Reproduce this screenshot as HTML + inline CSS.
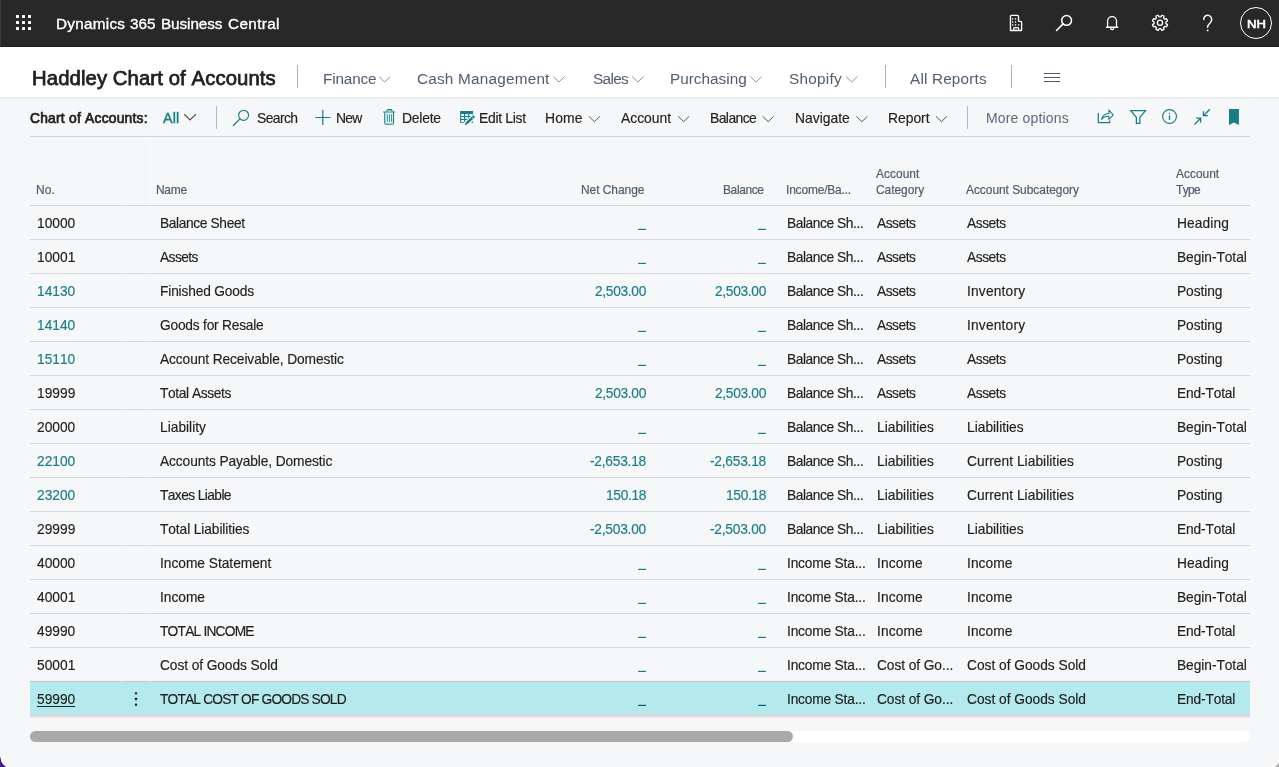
<!DOCTYPE html>
<html><head><meta charset="utf-8"><title>Chart of Accounts</title>
<style>
html,body{margin:0;padding:0;}
html{background:#f6f7f9;}
body{width:1279px;height:767px;overflow:hidden;position:relative;background:#f6f7f9;font-family:"Liberation Sans",sans-serif;}
.t{position:absolute;white-space:nowrap;font-kerning:none;}
#ly{position:absolute;left:0;top:0;width:1279px;height:767px;will-change:transform;}
#tw{position:absolute;left:0;top:0;width:1279px;height:767px;}
.r{position:absolute;}
svg{position:absolute;left:0;top:0;overflow:visible;}
</style></head><body>
<div class="r" style="left:0px;top:0px;width:1279px;height:46px;background:#282828;"></div>
<div class="r" style="left:0px;top:0px;width:1px;height:46px;background:#3a3a3a;"></div>
<div class="r" style="left:0px;top:46px;width:1279px;height:1px;background:#1c1c1c;"></div>
<div class="r" style="left:0px;top:47px;width:1279px;height:50px;background:#ffffff;"></div>
<div class="r" style="left:0px;top:97px;width:1279px;height:1px;background:#e9eaed;"></div>
<div class="r" style="left:0px;top:98px;width:1279px;height:1px;background:#f1f2f5;"></div>
<div class="r" style="left:16px;top:15px;width:3px;height:3px;background:#ffffff;border-radius:0.5px;"></div>
<div class="r" style="left:16px;top:21px;width:3px;height:3px;background:#ffffff;border-radius:0.5px;"></div>
<div class="r" style="left:16px;top:27px;width:3px;height:3px;background:#ffffff;border-radius:0.5px;"></div>
<div class="r" style="left:22px;top:15px;width:3px;height:3px;background:#ffffff;border-radius:0.5px;"></div>
<div class="r" style="left:22px;top:21px;width:3px;height:3px;background:#ffffff;border-radius:0.5px;"></div>
<div class="r" style="left:22px;top:27px;width:3px;height:3px;background:#ffffff;border-radius:0.5px;"></div>
<div class="r" style="left:28px;top:15px;width:3px;height:3px;background:#ffffff;border-radius:0.5px;"></div>
<div class="r" style="left:28px;top:21px;width:3px;height:3px;background:#ffffff;border-radius:0.5px;"></div>
<div class="r" style="left:28px;top:27px;width:3px;height:3px;background:#ffffff;border-radius:0.5px;"></div>
<div class="r" style="left:1239.65px;top:6.85px;width:30.3px;height:30.3px;border:1px solid #fff;border-radius:50%;"></div>
<div class="r" style="left:297px;top:65px;width:1px;height:23px;background:#a9afb8;"></div>
<div class="r" style="left:885px;top:65px;width:1px;height:23px;background:#a9afb8;"></div>
<div class="r" style="left:1011px;top:65px;width:1px;height:23px;background:#a9afb8;"></div>
<div class="r" style="left:1044px;top:73px;width:16px;height:1px;background:#4c586b;"></div>
<div class="r" style="left:1044px;top:77px;width:16px;height:1px;background:#4c586b;"></div>
<div class="r" style="left:1044px;top:81px;width:16px;height:1px;background:#4c586b;"></div>
<div class="r" style="left:216px;top:106px;width:1px;height:23px;background:#b4bac2;"></div>
<div class="r" style="left:967px;top:106px;width:1px;height:23px;background:#b4bac2;"></div>
<div class="r" style="left:30px;top:136px;width:1220px;height:1px;background:#cfd3d8;"></div>
<div class="r" style="left:30px;top:205px;width:1220px;height:1px;background:#d4d7dc;"></div>
<div class="r" style="left:30px;top:680px;width:1220px;height:1px;background:linear-gradient(to bottom,rgba(0,0,0,0),rgba(0,0,0,0.05));"></div>
<div class="r" style="left:30px;top:682px;width:1220px;height:32px;background:#b4e9ed;"></div>
<div class="r" style="left:30px;top:714px;width:1220px;height:1px;background:#dddcdb;"></div>
<div class="r" style="left:30px;top:715px;width:1220px;height:4px;background:linear-gradient(to bottom,rgba(0,0,0,0.16),rgba(0,0,0,0.05) 50%,rgba(0,0,0,0));"></div>
<div class="r" style="left:30px;top:239px;width:1220px;height:1px;background:#d4d7dc;"></div>
<div class="r" style="left:30px;top:273px;width:1220px;height:1px;background:#d4d7dc;"></div>
<div class="r" style="left:30px;top:307px;width:1220px;height:1px;background:#d4d7dc;"></div>
<div class="r" style="left:30px;top:341px;width:1220px;height:1px;background:#d4d7dc;"></div>
<div class="r" style="left:30px;top:375px;width:1220px;height:1px;background:#d4d7dc;"></div>
<div class="r" style="left:30px;top:409px;width:1220px;height:1px;background:#d4d7dc;"></div>
<div class="r" style="left:30px;top:443px;width:1220px;height:1px;background:#d4d7dc;"></div>
<div class="r" style="left:30px;top:477px;width:1220px;height:1px;background:#d4d7dc;"></div>
<div class="r" style="left:30px;top:511px;width:1220px;height:1px;background:#d4d7dc;"></div>
<div class="r" style="left:30px;top:545px;width:1220px;height:1px;background:#d4d7dc;"></div>
<div class="r" style="left:30px;top:579px;width:1220px;height:1px;background:#d4d7dc;"></div>
<div class="r" style="left:30px;top:613px;width:1220px;height:1px;background:#d4d7dc;"></div>
<div class="r" style="left:30px;top:647px;width:1220px;height:1px;background:#d4d7dc;"></div>
<div class="r" style="left:30px;top:681px;width:1220px;height:1px;background:#c6c8cd;"></div>
<div class="r" style="left:150px;top:137px;width:1px;height:68px;background:#fafbfc;"></div>
<div class="r" style="left:121px;top:205px;width:0.6px;height:1px;background:#e9ebee;"></div>
<div class="r" style="left:150px;top:205px;width:0.6px;height:1px;background:#e9ebee;"></div>
<div class="r" style="left:121px;top:239px;width:0.6px;height:1px;background:#e9ebee;"></div>
<div class="r" style="left:150px;top:239px;width:0.6px;height:1px;background:#e9ebee;"></div>
<div class="r" style="left:121px;top:273px;width:0.6px;height:1px;background:#e9ebee;"></div>
<div class="r" style="left:150px;top:273px;width:0.6px;height:1px;background:#e9ebee;"></div>
<div class="r" style="left:121px;top:307px;width:0.6px;height:1px;background:#e9ebee;"></div>
<div class="r" style="left:150px;top:307px;width:0.6px;height:1px;background:#e9ebee;"></div>
<div class="r" style="left:121px;top:341px;width:0.6px;height:1px;background:#e9ebee;"></div>
<div class="r" style="left:150px;top:341px;width:0.6px;height:1px;background:#e9ebee;"></div>
<div class="r" style="left:121px;top:375px;width:0.6px;height:1px;background:#e9ebee;"></div>
<div class="r" style="left:150px;top:375px;width:0.6px;height:1px;background:#e9ebee;"></div>
<div class="r" style="left:121px;top:409px;width:0.6px;height:1px;background:#e9ebee;"></div>
<div class="r" style="left:150px;top:409px;width:0.6px;height:1px;background:#e9ebee;"></div>
<div class="r" style="left:121px;top:443px;width:0.6px;height:1px;background:#e9ebee;"></div>
<div class="r" style="left:150px;top:443px;width:0.6px;height:1px;background:#e9ebee;"></div>
<div class="r" style="left:121px;top:477px;width:0.6px;height:1px;background:#e9ebee;"></div>
<div class="r" style="left:150px;top:477px;width:0.6px;height:1px;background:#e9ebee;"></div>
<div class="r" style="left:121px;top:511px;width:0.6px;height:1px;background:#e9ebee;"></div>
<div class="r" style="left:150px;top:511px;width:0.6px;height:1px;background:#e9ebee;"></div>
<div class="r" style="left:121px;top:545px;width:0.6px;height:1px;background:#e9ebee;"></div>
<div class="r" style="left:150px;top:545px;width:0.6px;height:1px;background:#e9ebee;"></div>
<div class="r" style="left:121px;top:579px;width:0.6px;height:1px;background:#e9ebee;"></div>
<div class="r" style="left:150px;top:579px;width:0.6px;height:1px;background:#e9ebee;"></div>
<div class="r" style="left:121px;top:613px;width:0.6px;height:1px;background:#e9ebee;"></div>
<div class="r" style="left:150px;top:613px;width:0.6px;height:1px;background:#e9ebee;"></div>
<div class="r" style="left:121px;top:647px;width:0.6px;height:1px;background:#e9ebee;"></div>
<div class="r" style="left:150px;top:647px;width:0.6px;height:1px;background:#e9ebee;"></div>
<div class="r" style="left:121px;top:681px;width:0.6px;height:1px;background:#e9ebee;"></div>
<div class="r" style="left:150px;top:681px;width:0.6px;height:1px;background:#e9ebee;"></div>
<div class="r" style="left:30px;top:731px;width:1220px;height:11px;background:#ffffff;border-radius:5.5px;"></div>
<div class="r" style="left:30px;top:731px;width:763px;height:11px;background:#a9a9a9;border-radius:5.5px;"></div>
<svg width="1279" height="767" viewBox="0 0 1279 767"><path d="M379.05 76.6 L384.65000000000003 82.0 L390.25 76.6" stroke="#8d949f" stroke-width="1.0" fill="none" stroke-linejoin="miter"/><path d="M553.3 76.6 L558.9 82.0 L564.5 76.6" stroke="#8d949f" stroke-width="1.0" fill="none" stroke-linejoin="miter"/><path d="M632.3 76.6 L637.9 82.0 L643.5 76.6" stroke="#8d949f" stroke-width="1.0" fill="none" stroke-linejoin="miter"/><path d="M750.3 76.6 L755.9 82.0 L761.5 76.6" stroke="#8d949f" stroke-width="1.0" fill="none" stroke-linejoin="miter"/><path d="M846.05 76.6 L851.65 82.0 L857.25 76.6" stroke="#8d949f" stroke-width="1.0" fill="none" stroke-linejoin="miter"/><path d="M184.2 114.3 L190.04999999999998 120.0 L195.89999999999998 114.3" stroke="#505050" stroke-width="1.2" fill="none" stroke-linejoin="miter"/><path d="M588.9 116.3 L594.4 121.7 L599.9 116.3" stroke="#555" stroke-width="1.0" fill="none" stroke-linejoin="miter"/><path d="M678.2 116.3 L683.7 121.7 L689.2 116.3" stroke="#555" stroke-width="1.0" fill="none" stroke-linejoin="miter"/><path d="M762.7 116.3 L768.2 121.7 L773.7 116.3" stroke="#555" stroke-width="1.0" fill="none" stroke-linejoin="miter"/><path d="M856.4 116.3 L861.9 121.7 L867.4 116.3" stroke="#555" stroke-width="1.0" fill="none" stroke-linejoin="miter"/><path d="M935.9 116.3 L941.4 121.7 L946.9 116.3" stroke="#555" stroke-width="1.0" fill="none" stroke-linejoin="miter"/><path d="M1010.45 30.5 V16.4 a1 1 0 0 1 1-1 h6.05 a1 1 0 0 1 1 1 V20.4 a0.9 0.9 0 0 0 0.9 0.9 h1.3 a0.9 0.9 0 0 1 0.9 0.9 V30.5 Z" stroke="#ffffff" stroke-width="1.35" fill="none" stroke-linejoin="round"/><path d="M1013.7 30.3 V28.4 a0.8 0.8 0 0 1 0.8-0.8 h3.3 a0.8 0.8 0 0 1 0.8 0.8 V30.3" stroke="#ffffff" stroke-width="1.25" fill="none" /><rect x="1015.0" y="28.6" width="2.3" height="1.2" fill="#9a9a9a"/><rect x="1012.00" y="18.00" width="1.3" height="1.7" rx="0.3" fill="#d4d4d4"/><rect x="1014.90" y="18.00" width="1.3" height="1.7" rx="0.3" fill="#d4d4d4"/><rect x="1012.00" y="21.05" width="1.3" height="1.7" rx="0.3" fill="#d4d4d4"/><rect x="1014.90" y="21.05" width="1.3" height="1.7" rx="0.3" fill="#d4d4d4"/><rect x="1012.00" y="24.10" width="1.3" height="1.7" rx="0.3" fill="#d4d4d4"/><rect x="1014.90" y="24.10" width="1.3" height="1.7" rx="0.3" fill="#d4d4d4"/><rect x="1017.95" y="24.10" width="1.3" height="1.7" rx="0.3" fill="#d4d4d4"/><circle cx="1066.6" cy="20.4" r="4.9" stroke="#fff" stroke-width="1.5" fill="none"/><path d="M1063.1 23.9 L1056.5 30.5" stroke="#ffffff" stroke-width="1.5" fill="none" stroke-linecap="round"/><path d="M1107.6 27.1 V21 a4.45 4.45 0 0 1 8.9 0 V27.1 M1106.5 27.25 H1117.8 M1110.6 28.3 a1.5 1.25 0 0 0 3 0" stroke="#ffffff" stroke-width="1.3" fill="none" stroke-linecap="round"/><path d="M1161.81 15.26 L1164.05 16.19 L1163.61 18.07 L1164.73 19.19 L1166.61 18.75 L1167.54 20.99 L1165.90 22.01 L1165.90 23.59 L1167.54 24.61 L1166.61 26.85 L1164.73 26.41 L1163.61 27.53 L1164.05 29.41 L1161.81 30.34 L1160.79 28.70 L1159.21 28.70 L1158.19 30.34 L1155.95 29.41 L1156.39 27.53 L1155.27 26.41 L1153.39 26.85 L1152.46 24.61 L1154.10 23.59 L1154.10 22.01 L1152.46 20.99 L1153.39 18.75 L1155.27 19.19 L1156.39 18.07 L1155.95 16.19 L1158.19 15.26 L1159.21 16.90 L1160.79 16.90 Z" stroke="#ffffff" stroke-width="1.3" fill="none" stroke-linejoin="round"/><circle cx="1160.0" cy="22.8" r="2.6" stroke="#fff" stroke-width="1.3" fill="none"/><path d="M1203.7 19.6 a4 4.3 0 1 1 6.6 3.2 c-1.6 1.3 -2.7 2.2 -2.7 4.5" stroke="#ffffff" stroke-width="1.45" fill="none" stroke-linecap="round"/><circle cx="1207.6" cy="30.4" r="0.95" fill="#fff"/><circle cx="243.6" cy="115.3" r="5.0" stroke="#187d86" stroke-width="1.15" fill="none"/><path d="M240.0 118.9 L233.4 125.5" stroke="#187d86" stroke-width="1.2" fill="none" stroke-linecap="round"/><path d="M315.2 117.5 H330.4 M322.8 110 V125" stroke="#187d86" stroke-width="1.2" fill="none" /><path d="M383.1 112 H395" stroke="#187d86" stroke-width="1.0" fill="none" /><path d="M386.9 111.6 V110.6 a1.1 1.1 0 0 1 1.1-1.1 h3 a1.1 1.1 0 0 1 1.1 1.1 V111.6" stroke="#187d86" stroke-width="1.0" fill="#8fc3c8" /><path d="M384.75 112.3 V122.9 a1.3 1.3 0 0 0 1.3 1.3 h6.2 a1.3 1.3 0 0 0 1.3-1.3 V112.3" stroke="#187d86" stroke-width="1.05" fill="none" /><path d="M387.4 114.3 V121.8 M389.45 114.3 V121.8 M391.5 114.3 V121.8" stroke="#187d86" stroke-width="0.85" fill="none" opacity="0.9"/><rect x="385.3" y="113" width="8" height="10.4" fill="#187d86" opacity="0.10"/><rect x="460.1" y="111" width="12.9" height="11.8" fill="#187d86"/><rect x="461.1" y="114.1" width="2.90" height="1.90" fill="#fdfdfe"/><rect x="461.1" y="117.0" width="2.90" height="1.80" fill="#fdfdfe"/><rect x="461.1" y="120.0" width="2.90" height="1.90" fill="#fdfdfe"/><rect x="465.1" y="114.1" width="3.00" height="1.90" fill="#fdfdfe"/><rect x="465.1" y="117.0" width="3.00" height="1.80" fill="#fdfdfe"/><rect x="465.1" y="120.0" width="3.00" height="1.90" fill="#fdfdfe"/><rect x="469.2" y="114.1" width="2.80" height="1.90" fill="#fdfdfe"/><rect x="469.2" y="117.0" width="2.80" height="1.80" fill="#fdfdfe"/><rect x="469.2" y="120.0" width="2.80" height="1.90" fill="#fdfdfe"/><path d="M465.2 124.9 L475.2 115.4" stroke="#f6f7f9" stroke-width="5.0" fill="none" /><path d="M466.9 123.0 L474.2 116.1" stroke="#187d86" stroke-width="2.5" fill="none" /><path d="M464.9 124.9 L465.9 122.3 L467.6 124.0 Z" stroke="#187d86" stroke-width="0.3" fill="#187d86" /><path d="M471.6 116.7 L473.6 118.8" stroke="#f6f7f9" stroke-width="0.7" fill="none" /><path d="M1098.3 113.1 V122.7 H1109.7 V120.4" stroke="#187d86" stroke-width="1.25" fill="none" /><path d="M1101.6 119.3 C1102.6 115.2 1105.2 113.6 1108.9 113.5 V110 L1113.2 114.8 L1108.9 119.5 V116.2 C1105.8 116.1 1103.3 117 1101.6 119.3 Z" stroke="#187d86" stroke-width="1.1" fill="none" stroke-linejoin="round"/><path d="M1130.7 110.65 H1145.5 L1139.8 117.4 V123.3 H1136.4 V117.4 Z" stroke="#187d86" stroke-width="1.3" fill="none" stroke-linejoin="miter"/><circle cx="1169.55" cy="116.5" r="6.9" stroke="#187d86" stroke-width="1.15" fill="none"/><path d="M1169.5 115.3 V120.0" stroke="#187d86" stroke-width="1.3" fill="none" /><circle cx="1169.5" cy="113.5" r="0.8" fill="#187d86"/><path d="M1209.8 109.3 L1203.4 115.7 M1203.4 111.2 V115.7 H1207.9 M1194.3 124.6 L1200.7 118.2 M1196.2 118.2 H1200.7 V122.7" stroke="#187d86" stroke-width="1.3" fill="none" /><path d="M1229 109 H1238.9 V124.95 L1233.95 122.5 L1229 124.95 Z" stroke="#187d86" stroke-width="0" fill="#187d86" /><rect x="638.10" y="228.80" width="7.9" height="1.2" fill="#187d86"/><rect x="758.00" y="228.80" width="7.9" height="1.2" fill="#187d86"/><rect x="638.10" y="262.80" width="7.9" height="1.2" fill="#187d86"/><rect x="758.00" y="262.80" width="7.9" height="1.2" fill="#187d86"/><rect x="638.10" y="330.80" width="7.9" height="1.2" fill="#187d86"/><rect x="758.00" y="330.80" width="7.9" height="1.2" fill="#187d86"/><rect x="638.10" y="364.80" width="7.9" height="1.2" fill="#187d86"/><rect x="758.00" y="364.80" width="7.9" height="1.2" fill="#187d86"/><rect x="638.10" y="432.80" width="7.9" height="1.2" fill="#187d86"/><rect x="758.00" y="432.80" width="7.9" height="1.2" fill="#187d86"/><rect x="638.10" y="568.80" width="7.9" height="1.2" fill="#187d86"/><rect x="758.00" y="568.80" width="7.9" height="1.2" fill="#187d86"/><rect x="638.10" y="602.80" width="7.9" height="1.2" fill="#187d86"/><rect x="758.00" y="602.80" width="7.9" height="1.2" fill="#187d86"/><rect x="638.10" y="636.80" width="7.9" height="1.2" fill="#187d86"/><rect x="758.00" y="636.80" width="7.9" height="1.2" fill="#187d86"/><rect x="638.10" y="670.80" width="7.9" height="1.2" fill="#187d86"/><rect x="758.00" y="670.80" width="7.9" height="1.2" fill="#187d86"/><rect x="638.10" y="704.80" width="7.9" height="1.2" fill="#00646b"/><rect x="758.00" y="704.80" width="7.9" height="1.2" fill="#00646b"/><rect x="134.85" y="692.15" width="2.3" height="2.3" rx="0.4" fill="#2b2b2b"/><rect x="134.85" y="697.85" width="2.3" height="2.3" rx="0.4" fill="#2b2b2b"/><rect x="134.85" y="703.55" width="2.3" height="2.3" rx="0.4" fill="#2b2b2b"/><path d="M0.5 757.3 A11 11 0 0 0 11.5 768.3 L-1 768.3 L-1 757.3 Z" fill="#3f1a8a" stroke="#ffffff" stroke-width="1.6" paint-order="stroke"/><path d="M1280.2 757.5 A11 11 0 0 1 1269.2 768.5 L1281 768.5 L1281 757.5 Z" fill="#a5a5a5" stroke="#ffffff" stroke-width="1.6" paint-order="stroke"/></svg>
<div id="ly"></div>
<div id="tw">
<div class="t" style="left:56.34px;top:12px;font-size:15.3px;line-height:21px;letter-spacing:0.264px;color:#ffffff;transform:translateY(0.60px) rotate(0.001deg);transform-origin:0 50%;-webkit-text-stroke:0.35px #fff;">Dynamics</div>
<div class="t" style="left:130.42px;top:12px;font-size:15.3px;line-height:21px;letter-spacing:-0.001px;color:#ffffff;transform:translateY(0.60px) rotate(0.001deg);transform-origin:0 50%;-webkit-text-stroke:0.35px #fff;">365</div>
<div class="t" style="left:161.24px;top:12px;font-size:15.3px;line-height:21px;letter-spacing:-0.082px;color:#ffffff;transform:translateY(0.60px) rotate(0.001deg);transform-origin:0 50%;-webkit-text-stroke:0.35px #fff;">Business</div>
<div class="t" style="left:228.12px;top:12px;font-size:15.3px;line-height:21px;letter-spacing:0.363px;color:#ffffff;transform:translateY(0.60px) rotate(0.001deg);transform-origin:0 50%;-webkit-text-stroke:0.35px #fff;">Central</div>
<div class="t" style="left:1246.53px;top:15px;font-size:11.7px;line-height:17px;letter-spacing:0.015px;color:#ffffff;transform:translateY(0.30px) rotate(0.001deg) scaleX(1.120);transform-origin:0 50%;-webkit-text-stroke:0.6px #fff;">NH</div>
<div class="t" style="left:31.83px;top:65px;font-size:20.3px;line-height:26px;letter-spacing:0.101px;color:#212121;transform:translateY(0.25px) rotate(0.001deg);transform-origin:0 50%;-webkit-text-stroke:0.75px #212121;">Haddley Chart of Accounts</div>
<div class="t" style="left:322.64px;top:67px;font-size:15.3px;line-height:21px;letter-spacing:-0.149px;color:#505c6d;transform:translateY(0.75px) rotate(0.001deg);transform-origin:0 50%;">Finance</div>
<div class="t" style="left:417.22px;top:67px;font-size:15.3px;line-height:21px;letter-spacing:0.223px;color:#505c6d;transform:translateY(0.75px) rotate(0.001deg);transform-origin:0 50%;">Cash Management</div>
<div class="t" style="left:593.06px;top:67px;font-size:15.3px;line-height:21px;letter-spacing:-0.631px;color:#505c6d;transform:translateY(0.75px) rotate(0.001deg);transform-origin:0 50%;">Sales</div>
<div class="t" style="left:670.24px;top:67px;font-size:15.3px;line-height:21px;letter-spacing:0.022px;color:#505c6d;transform:translateY(0.75px) rotate(0.001deg);transform-origin:0 50%;">Purchasing</div>
<div class="t" style="left:789.31px;top:67px;font-size:15.3px;line-height:21px;letter-spacing:0.282px;color:#505c6d;transform:translateY(0.75px) rotate(0.001deg);transform-origin:0 50%;">Shopify</div>
<div class="t" style="left:910.47px;top:67px;font-size:15.3px;line-height:21px;letter-spacing:0.176px;color:#505c6d;transform:translateY(0.75px) rotate(0.001deg);transform-origin:0 50%;">All Reports</div>
<div class="t" style="left:29.90px;top:109px;font-size:13.8px;line-height:19px;letter-spacing:0.238px;color:#212121;transform:translateY(0.00px) rotate(0.001deg);transform-origin:0 50%;-webkit-text-stroke:0.7px #212121;">Chart of Accounts:</div>
<div class="t" style="left:163.47px;top:108px;font-size:14.3px;line-height:20px;letter-spacing:0.146px;color:#187d86;transform:translateY(0.00px) rotate(0.001deg);transform-origin:0 50%;-webkit-text-stroke:0.4px #187d86;">All</div>
<div class="t" style="left:256.87px;top:108px;font-size:13.9px;line-height:20px;letter-spacing:-0.602px;color:#212121;transform:translateY(0.00px) rotate(0.001deg);transform-origin:0 50%;-webkit-text-stroke:0.15px #212121;">Search</div>
<div class="t" style="left:336.16px;top:108px;font-size:13.9px;line-height:20px;letter-spacing:-0.700px;color:#212121;transform:translateY(0.00px) rotate(0.001deg);transform-origin:0 50%;-webkit-text-stroke:0.15px #212121;">New</div>
<div class="t" style="left:401.76px;top:108px;font-size:13.9px;line-height:20px;letter-spacing:-0.224px;color:#212121;transform:translateY(0.00px) rotate(0.001deg);transform-origin:0 50%;-webkit-text-stroke:0.15px #212121;">Delete</div>
<div class="t" style="left:479.26px;top:108px;font-size:13.9px;line-height:20px;letter-spacing:-0.294px;color:#212121;transform:translateY(0.00px) rotate(0.001deg);transform-origin:0 50%;-webkit-text-stroke:0.15px #212121;">Edit List</div>
<div class="t" style="left:545.26px;top:108px;font-size:13.9px;line-height:20px;letter-spacing:0.127px;color:#212121;transform:translateY(0.00px) rotate(0.001deg);transform-origin:0 50%;-webkit-text-stroke:0.15px #212121;">Home</div>
<div class="t" style="left:620.72px;top:108px;font-size:13.9px;line-height:20px;letter-spacing:-0.016px;color:#212121;transform:translateY(0.00px) rotate(0.001deg);transform-origin:0 50%;-webkit-text-stroke:0.15px #212121;">Account</div>
<div class="t" style="left:709.76px;top:108px;font-size:13.9px;line-height:20px;letter-spacing:-0.562px;color:#212121;transform:translateY(0.00px) rotate(0.001deg);transform-origin:0 50%;-webkit-text-stroke:0.15px #212121;">Balance</div>
<div class="t" style="left:795.26px;top:108px;font-size:13.9px;line-height:20px;letter-spacing:-0.000px;color:#212121;transform:translateY(0.00px) rotate(0.001deg);transform-origin:0 50%;-webkit-text-stroke:0.15px #212121;">Navigate</div>
<div class="t" style="left:887.76px;top:108px;font-size:13.9px;line-height:20px;letter-spacing:-0.026px;color:#212121;transform:translateY(0.00px) rotate(0.001deg);transform-origin:0 50%;-webkit-text-stroke:0.15px #212121;">Report</div>
<div class="t" style="left:985.75px;top:108px;font-size:14px;line-height:20px;letter-spacing:0.166px;color:#5c697c;transform:translateY(0.00px) rotate(0.001deg);transform-origin:0 50%;">More options</div>
<div class="t" style="left:35.85px;top:181px;font-size:11.95px;line-height:18px;letter-spacing:0.123px;color:#505c6d;transform:translateY(0.00px) rotate(0.001deg);transform-origin:0 50%;-webkit-text-stroke:0.2px #505c6d;">No.</div>
<div class="t" style="left:156.40px;top:181px;font-size:11.95px;line-height:18px;letter-spacing:-0.248px;color:#505c6d;transform:translateY(0.00px) rotate(0.001deg);transform-origin:0 50%;-webkit-text-stroke:0.2px #505c6d;">Name</div>
<div class="t" style="left:580.52px;top:181px;font-size:11.95px;line-height:18px;letter-spacing:-0.029px;color:#505c6d;transform:translateY(0.00px) rotate(0.001deg);transform-origin:0 50%;-webkit-text-stroke:0.2px #505c6d;">Net Change</div>
<div class="t" style="left:723.02px;top:181px;font-size:11.95px;line-height:18px;letter-spacing:-0.362px;color:#505c6d;transform:translateY(0.00px) rotate(0.001deg);transform-origin:0 50%;-webkit-text-stroke:0.2px #505c6d;">Balance</div>
<div class="t" style="left:786.45px;top:181px;font-size:11.95px;line-height:18px;letter-spacing:-0.168px;color:#505c6d;transform:translateY(0.00px) rotate(0.001deg);transform-origin:0 50%;-webkit-text-stroke:0.2px #505c6d;">Income/Ba...</div>
<div class="t" style="left:876.25px;top:165px;font-size:11.95px;line-height:18px;letter-spacing:0.026px;color:#505c6d;transform:translateY(0.00px) rotate(0.001deg);transform-origin:0 50%;-webkit-text-stroke:0.2px #505c6d;">Account</div>
<div class="t" style="left:875.70px;top:181px;font-size:11.95px;line-height:18px;letter-spacing:-0.024px;color:#505c6d;transform:translateY(0.00px) rotate(0.001deg);transform-origin:0 50%;-webkit-text-stroke:0.2px #505c6d;">Category</div>
<div class="t" style="left:966.25px;top:181px;font-size:11.95px;line-height:18px;letter-spacing:-0.032px;color:#505c6d;transform:translateY(0.00px) rotate(0.001deg);transform-origin:0 50%;-webkit-text-stroke:0.2px #505c6d;">Account Subcategory</div>
<div class="t" style="left:1176.30px;top:165px;font-size:11.95px;line-height:18px;letter-spacing:0.001px;color:#505c6d;transform:translateY(0.00px) rotate(0.001deg);transform-origin:0 50%;-webkit-text-stroke:0.2px #505c6d;">Account</div>
<div class="t" style="left:1176.15px;top:181px;font-size:11.95px;line-height:18px;letter-spacing:-0.629px;color:#505c6d;transform:translateY(0.00px) rotate(0.001deg);transform-origin:0 50%;-webkit-text-stroke:0.2px #505c6d;">Type</div>
<div class="t" style="left:36.85px;top:214px;font-size:13.75px;line-height:19px;letter-spacing:-0.012px;color:#212121;transform:translateY(0.00px) rotate(0.001deg);transform-origin:0 50%;-webkit-text-stroke:0.15px #212121;">10000</div>
<div class="t" style="left:160.30px;top:214px;font-size:13.75px;line-height:19px;letter-spacing:-0.370px;color:#212121;transform:translateY(0.00px) rotate(0.001deg);transform-origin:0 50%;-webkit-text-stroke:0.15px #212121;">Balance Sheet</div>
<div class="t" style="left:787.25px;top:214px;font-size:13.75px;line-height:19px;letter-spacing:-0.424px;color:#212121;transform:translateY(0.00px) rotate(0.001deg);transform-origin:0 50%;-webkit-text-stroke:0.15px #212121;">Balance Sh...</div>
<div class="t" style="left:876.85px;top:214px;font-size:13.75px;line-height:19px;letter-spacing:-0.483px;color:#212121;transform:translateY(0.00px) rotate(0.001deg);transform-origin:0 50%;-webkit-text-stroke:0.15px #212121;">Assets</div>
<div class="t" style="left:966.65px;top:214px;font-size:13.75px;line-height:19px;letter-spacing:-0.443px;color:#212121;transform:translateY(0.00px) rotate(0.001deg);transform-origin:0 50%;-webkit-text-stroke:0.15px #212121;">Assets</div>
<div class="t" style="left:1176.75px;top:214px;font-size:13.75px;line-height:19px;letter-spacing:0.103px;color:#212121;transform:translateY(0.00px) rotate(0.001deg);transform-origin:0 50%;-webkit-text-stroke:0.15px #212121;">Heading</div>
<div class="t" style="left:36.85px;top:248px;font-size:13.75px;line-height:19px;letter-spacing:0.021px;color:#212121;transform:translateY(0.00px) rotate(0.001deg);transform-origin:0 50%;-webkit-text-stroke:0.15px #212121;">10001</div>
<div class="t" style="left:160.30px;top:248px;font-size:13.75px;line-height:19px;letter-spacing:-0.553px;color:#212121;transform:translateY(0.00px) rotate(0.001deg);transform-origin:0 50%;-webkit-text-stroke:0.15px #212121;">Assets</div>
<div class="t" style="left:787.25px;top:248px;font-size:13.75px;line-height:19px;letter-spacing:-0.424px;color:#212121;transform:translateY(0.00px) rotate(0.001deg);transform-origin:0 50%;-webkit-text-stroke:0.15px #212121;">Balance Sh...</div>
<div class="t" style="left:876.85px;top:248px;font-size:13.75px;line-height:19px;letter-spacing:-0.483px;color:#212121;transform:translateY(0.00px) rotate(0.001deg);transform-origin:0 50%;-webkit-text-stroke:0.15px #212121;">Assets</div>
<div class="t" style="left:966.65px;top:248px;font-size:13.75px;line-height:19px;letter-spacing:-0.443px;color:#212121;transform:translateY(0.00px) rotate(0.001deg);transform-origin:0 50%;-webkit-text-stroke:0.15px #212121;">Assets</div>
<div class="t" style="left:1176.75px;top:248px;font-size:13.75px;line-height:19px;letter-spacing:-0.054px;color:#212121;transform:translateY(0.00px) rotate(0.001deg);transform-origin:0 50%;-webkit-text-stroke:0.15px #212121;">Begin-Total</div>
<div class="t" style="left:36.85px;top:282px;font-size:13.75px;line-height:19px;letter-spacing:-0.012px;color:#187d86;transform:translateY(0.00px) rotate(0.001deg);transform-origin:0 50%;-webkit-text-stroke:0.15px #187d86;">14130</div>
<div class="t" style="left:160.30px;top:282px;font-size:13.75px;line-height:19px;letter-spacing:-0.162px;color:#212121;transform:translateY(0.00px) rotate(0.001deg);transform-origin:0 50%;-webkit-text-stroke:0.15px #212121;">Finished Goods</div>
<div class="t" style="left:594.91px;top:282px;font-size:13.75px;line-height:19px;letter-spacing:-0.313px;color:#187d86;transform:translateY(0.00px) rotate(0.001deg);transform-origin:0 50%;-webkit-text-stroke:0.15px #187d86;">2,503.00</div>
<div class="t" style="left:714.81px;top:282px;font-size:13.75px;line-height:19px;letter-spacing:-0.313px;color:#187d86;transform:translateY(0.00px) rotate(0.001deg);transform-origin:0 50%;-webkit-text-stroke:0.15px #187d86;">2,503.00</div>
<div class="t" style="left:787.25px;top:282px;font-size:13.75px;line-height:19px;letter-spacing:-0.424px;color:#212121;transform:translateY(0.00px) rotate(0.001deg);transform-origin:0 50%;-webkit-text-stroke:0.15px #212121;">Balance Sh...</div>
<div class="t" style="left:876.85px;top:282px;font-size:13.75px;line-height:19px;letter-spacing:-0.483px;color:#212121;transform:translateY(0.00px) rotate(0.001deg);transform-origin:0 50%;-webkit-text-stroke:0.15px #212121;">Assets</div>
<div class="t" style="left:966.65px;top:282px;font-size:13.75px;line-height:19px;letter-spacing:0.190px;color:#212121;transform:translateY(0.00px) rotate(0.001deg);transform-origin:0 50%;-webkit-text-stroke:0.15px #212121;">Inventory</div>
<div class="t" style="left:1176.75px;top:282px;font-size:13.75px;line-height:19px;letter-spacing:-0.088px;color:#212121;transform:translateY(0.00px) rotate(0.001deg);transform-origin:0 50%;-webkit-text-stroke:0.15px #212121;">Posting</div>
<div class="t" style="left:36.85px;top:316px;font-size:13.75px;line-height:19px;letter-spacing:-0.012px;color:#187d86;transform:translateY(0.00px) rotate(0.001deg);transform-origin:0 50%;-webkit-text-stroke:0.15px #187d86;">14140</div>
<div class="t" style="left:160.30px;top:316px;font-size:13.75px;line-height:19px;letter-spacing:-0.216px;color:#212121;transform:translateY(0.00px) rotate(0.001deg);transform-origin:0 50%;-webkit-text-stroke:0.15px #212121;">Goods for Resale</div>
<div class="t" style="left:787.25px;top:316px;font-size:13.75px;line-height:19px;letter-spacing:-0.424px;color:#212121;transform:translateY(0.00px) rotate(0.001deg);transform-origin:0 50%;-webkit-text-stroke:0.15px #212121;">Balance Sh...</div>
<div class="t" style="left:876.85px;top:316px;font-size:13.75px;line-height:19px;letter-spacing:-0.483px;color:#212121;transform:translateY(0.00px) rotate(0.001deg);transform-origin:0 50%;-webkit-text-stroke:0.15px #212121;">Assets</div>
<div class="t" style="left:966.65px;top:316px;font-size:13.75px;line-height:19px;letter-spacing:0.190px;color:#212121;transform:translateY(0.00px) rotate(0.001deg);transform-origin:0 50%;-webkit-text-stroke:0.15px #212121;">Inventory</div>
<div class="t" style="left:1176.75px;top:316px;font-size:13.75px;line-height:19px;letter-spacing:-0.088px;color:#212121;transform:translateY(0.00px) rotate(0.001deg);transform-origin:0 50%;-webkit-text-stroke:0.15px #212121;">Posting</div>
<div class="t" style="left:36.85px;top:350px;font-size:13.75px;line-height:19px;letter-spacing:-0.012px;color:#187d86;transform:translateY(0.00px) rotate(0.001deg);transform-origin:0 50%;-webkit-text-stroke:0.15px #187d86;">15110</div>
<div class="t" style="left:160.30px;top:350px;font-size:13.75px;line-height:19px;letter-spacing:-0.100px;color:#212121;transform:translateY(0.00px) rotate(0.001deg);transform-origin:0 50%;-webkit-text-stroke:0.15px #212121;">Account Receivable, Domestic</div>
<div class="t" style="left:787.25px;top:350px;font-size:13.75px;line-height:19px;letter-spacing:-0.424px;color:#212121;transform:translateY(0.00px) rotate(0.001deg);transform-origin:0 50%;-webkit-text-stroke:0.15px #212121;">Balance Sh...</div>
<div class="t" style="left:876.85px;top:350px;font-size:13.75px;line-height:19px;letter-spacing:-0.483px;color:#212121;transform:translateY(0.00px) rotate(0.001deg);transform-origin:0 50%;-webkit-text-stroke:0.15px #212121;">Assets</div>
<div class="t" style="left:966.65px;top:350px;font-size:13.75px;line-height:19px;letter-spacing:-0.443px;color:#212121;transform:translateY(0.00px) rotate(0.001deg);transform-origin:0 50%;-webkit-text-stroke:0.15px #212121;">Assets</div>
<div class="t" style="left:1176.75px;top:350px;font-size:13.75px;line-height:19px;letter-spacing:-0.088px;color:#212121;transform:translateY(0.00px) rotate(0.001deg);transform-origin:0 50%;-webkit-text-stroke:0.15px #212121;">Posting</div>
<div class="t" style="left:36.85px;top:384px;font-size:13.75px;line-height:19px;letter-spacing:0.016px;color:#212121;transform:translateY(0.00px) rotate(0.001deg);transform-origin:0 50%;-webkit-text-stroke:0.15px #212121;">19999</div>
<div class="t" style="left:160.30px;top:384px;font-size:13.75px;line-height:19px;letter-spacing:-0.387px;color:#212121;transform:translateY(0.00px) rotate(0.001deg);transform-origin:0 50%;-webkit-text-stroke:0.15px #212121;">Total Assets</div>
<div class="t" style="left:594.91px;top:384px;font-size:13.75px;line-height:19px;letter-spacing:-0.313px;color:#187d86;transform:translateY(0.00px) rotate(0.001deg);transform-origin:0 50%;-webkit-text-stroke:0.15px #187d86;">2,503.00</div>
<div class="t" style="left:714.81px;top:384px;font-size:13.75px;line-height:19px;letter-spacing:-0.313px;color:#187d86;transform:translateY(0.00px) rotate(0.001deg);transform-origin:0 50%;-webkit-text-stroke:0.15px #187d86;">2,503.00</div>
<div class="t" style="left:787.25px;top:384px;font-size:13.75px;line-height:19px;letter-spacing:-0.424px;color:#212121;transform:translateY(0.00px) rotate(0.001deg);transform-origin:0 50%;-webkit-text-stroke:0.15px #212121;">Balance Sh...</div>
<div class="t" style="left:876.85px;top:384px;font-size:13.75px;line-height:19px;letter-spacing:-0.483px;color:#212121;transform:translateY(0.00px) rotate(0.001deg);transform-origin:0 50%;-webkit-text-stroke:0.15px #212121;">Assets</div>
<div class="t" style="left:966.65px;top:384px;font-size:13.75px;line-height:19px;letter-spacing:-0.443px;color:#212121;transform:translateY(0.00px) rotate(0.001deg);transform-origin:0 50%;-webkit-text-stroke:0.15px #212121;">Assets</div>
<div class="t" style="left:1176.75px;top:384px;font-size:13.75px;line-height:19px;letter-spacing:-0.155px;color:#212121;transform:translateY(0.00px) rotate(0.001deg);transform-origin:0 50%;-webkit-text-stroke:0.15px #212121;">End-Total</div>
<div class="t" style="left:36.85px;top:418px;font-size:13.75px;line-height:19px;letter-spacing:-0.012px;color:#212121;transform:translateY(0.00px) rotate(0.001deg);transform-origin:0 50%;-webkit-text-stroke:0.15px #212121;">20000</div>
<div class="t" style="left:160.30px;top:418px;font-size:13.75px;line-height:19px;letter-spacing:0.009px;color:#212121;transform:translateY(0.00px) rotate(0.001deg);transform-origin:0 50%;-webkit-text-stroke:0.15px #212121;">Liability</div>
<div class="t" style="left:787.25px;top:418px;font-size:13.75px;line-height:19px;letter-spacing:-0.424px;color:#212121;transform:translateY(0.00px) rotate(0.001deg);transform-origin:0 50%;-webkit-text-stroke:0.15px #212121;">Balance Sh...</div>
<div class="t" style="left:876.85px;top:418px;font-size:13.75px;line-height:19px;letter-spacing:0.029px;color:#212121;transform:translateY(0.00px) rotate(0.001deg);transform-origin:0 50%;-webkit-text-stroke:0.15px #212121;">Liabilities</div>
<div class="t" style="left:966.65px;top:418px;font-size:13.75px;line-height:19px;letter-spacing:0.009px;color:#212121;transform:translateY(0.00px) rotate(0.001deg);transform-origin:0 50%;-webkit-text-stroke:0.15px #212121;">Liabilities</div>
<div class="t" style="left:1176.75px;top:418px;font-size:13.75px;line-height:19px;letter-spacing:-0.054px;color:#212121;transform:translateY(0.00px) rotate(0.001deg);transform-origin:0 50%;-webkit-text-stroke:0.15px #212121;">Begin-Total</div>
<div class="t" style="left:36.85px;top:452px;font-size:13.75px;line-height:19px;letter-spacing:-0.012px;color:#187d86;transform:translateY(0.00px) rotate(0.001deg);transform-origin:0 50%;-webkit-text-stroke:0.15px #187d86;">22100</div>
<div class="t" style="left:160.30px;top:452px;font-size:13.75px;line-height:19px;letter-spacing:-0.110px;color:#212121;transform:translateY(0.00px) rotate(0.001deg);transform-origin:0 50%;-webkit-text-stroke:0.15px #212121;">Accounts Payable, Domestic</div>
<div class="t" style="left:590.09px;top:452px;font-size:13.75px;line-height:19px;letter-spacing:-0.237px;color:#187d86;transform:translateY(0.00px) rotate(0.001deg);transform-origin:0 50%;-webkit-text-stroke:0.15px #187d86;">-2,653.18</div>
<div class="t" style="left:709.99px;top:452px;font-size:13.75px;line-height:19px;letter-spacing:-0.237px;color:#187d86;transform:translateY(0.00px) rotate(0.001deg);transform-origin:0 50%;-webkit-text-stroke:0.15px #187d86;">-2,653.18</div>
<div class="t" style="left:787.25px;top:452px;font-size:13.75px;line-height:19px;letter-spacing:-0.424px;color:#212121;transform:translateY(0.00px) rotate(0.001deg);transform-origin:0 50%;-webkit-text-stroke:0.15px #212121;">Balance Sh...</div>
<div class="t" style="left:876.85px;top:452px;font-size:13.75px;line-height:19px;letter-spacing:0.029px;color:#212121;transform:translateY(0.00px) rotate(0.001deg);transform-origin:0 50%;-webkit-text-stroke:0.15px #212121;">Liabilities</div>
<div class="t" style="left:966.65px;top:452px;font-size:13.75px;line-height:19px;letter-spacing:0.034px;color:#212121;transform:translateY(0.00px) rotate(0.001deg);transform-origin:0 50%;-webkit-text-stroke:0.15px #212121;">Current Liabilities</div>
<div class="t" style="left:1176.75px;top:452px;font-size:13.75px;line-height:19px;letter-spacing:-0.088px;color:#212121;transform:translateY(0.00px) rotate(0.001deg);transform-origin:0 50%;-webkit-text-stroke:0.15px #212121;">Posting</div>
<div class="t" style="left:36.85px;top:486px;font-size:13.75px;line-height:19px;letter-spacing:-0.012px;color:#187d86;transform:translateY(0.00px) rotate(0.001deg);transform-origin:0 50%;-webkit-text-stroke:0.15px #187d86;">23200</div>
<div class="t" style="left:160.30px;top:486px;font-size:13.75px;line-height:19px;letter-spacing:-0.586px;color:#212121;transform:translateY(0.00px) rotate(0.001deg);transform-origin:0 50%;-webkit-text-stroke:0.15px #212121;">Taxes Liable</div>
<div class="t" style="left:605.85px;top:486px;font-size:13.75px;line-height:19px;letter-spacing:-0.322px;color:#187d86;transform:translateY(0.00px) rotate(0.001deg);transform-origin:0 50%;-webkit-text-stroke:0.15px #187d86;">150.18</div>
<div class="t" style="left:725.75px;top:486px;font-size:13.75px;line-height:19px;letter-spacing:-0.322px;color:#187d86;transform:translateY(0.00px) rotate(0.001deg);transform-origin:0 50%;-webkit-text-stroke:0.15px #187d86;">150.18</div>
<div class="t" style="left:787.25px;top:486px;font-size:13.75px;line-height:19px;letter-spacing:-0.424px;color:#212121;transform:translateY(0.00px) rotate(0.001deg);transform-origin:0 50%;-webkit-text-stroke:0.15px #212121;">Balance Sh...</div>
<div class="t" style="left:876.85px;top:486px;font-size:13.75px;line-height:19px;letter-spacing:0.029px;color:#212121;transform:translateY(0.00px) rotate(0.001deg);transform-origin:0 50%;-webkit-text-stroke:0.15px #212121;">Liabilities</div>
<div class="t" style="left:966.65px;top:486px;font-size:13.75px;line-height:19px;letter-spacing:0.034px;color:#212121;transform:translateY(0.00px) rotate(0.001deg);transform-origin:0 50%;-webkit-text-stroke:0.15px #212121;">Current Liabilities</div>
<div class="t" style="left:1176.75px;top:486px;font-size:13.75px;line-height:19px;letter-spacing:-0.088px;color:#212121;transform:translateY(0.00px) rotate(0.001deg);transform-origin:0 50%;-webkit-text-stroke:0.15px #212121;">Posting</div>
<div class="t" style="left:36.85px;top:520px;font-size:13.75px;line-height:19px;letter-spacing:0.016px;color:#212121;transform:translateY(0.00px) rotate(0.001deg);transform-origin:0 50%;-webkit-text-stroke:0.15px #212121;">29999</div>
<div class="t" style="left:160.30px;top:520px;font-size:13.75px;line-height:19px;letter-spacing:-0.097px;color:#212121;transform:translateY(0.00px) rotate(0.001deg);transform-origin:0 50%;-webkit-text-stroke:0.15px #212121;">Total Liabilities</div>
<div class="t" style="left:589.99px;top:520px;font-size:13.75px;line-height:19px;letter-spacing:-0.232px;color:#187d86;transform:translateY(0.00px) rotate(0.001deg);transform-origin:0 50%;-webkit-text-stroke:0.15px #187d86;">-2,503.00</div>
<div class="t" style="left:709.89px;top:520px;font-size:13.75px;line-height:19px;letter-spacing:-0.232px;color:#187d86;transform:translateY(0.00px) rotate(0.001deg);transform-origin:0 50%;-webkit-text-stroke:0.15px #187d86;">-2,503.00</div>
<div class="t" style="left:787.25px;top:520px;font-size:13.75px;line-height:19px;letter-spacing:-0.424px;color:#212121;transform:translateY(0.00px) rotate(0.001deg);transform-origin:0 50%;-webkit-text-stroke:0.15px #212121;">Balance Sh...</div>
<div class="t" style="left:876.85px;top:520px;font-size:13.75px;line-height:19px;letter-spacing:0.029px;color:#212121;transform:translateY(0.00px) rotate(0.001deg);transform-origin:0 50%;-webkit-text-stroke:0.15px #212121;">Liabilities</div>
<div class="t" style="left:966.65px;top:520px;font-size:13.75px;line-height:19px;letter-spacing:0.009px;color:#212121;transform:translateY(0.00px) rotate(0.001deg);transform-origin:0 50%;-webkit-text-stroke:0.15px #212121;">Liabilities</div>
<div class="t" style="left:1176.75px;top:520px;font-size:13.75px;line-height:19px;letter-spacing:-0.155px;color:#212121;transform:translateY(0.00px) rotate(0.001deg);transform-origin:0 50%;-webkit-text-stroke:0.15px #212121;">End-Total</div>
<div class="t" style="left:36.85px;top:554px;font-size:13.75px;line-height:19px;letter-spacing:-0.012px;color:#212121;transform:translateY(0.00px) rotate(0.001deg);transform-origin:0 50%;-webkit-text-stroke:0.15px #212121;">40000</div>
<div class="t" style="left:160.30px;top:554px;font-size:13.75px;line-height:19px;letter-spacing:-0.022px;color:#212121;transform:translateY(0.00px) rotate(0.001deg);transform-origin:0 50%;-webkit-text-stroke:0.15px #212121;">Income Statement</div>
<div class="t" style="left:787.25px;top:554px;font-size:13.75px;line-height:19px;letter-spacing:-0.192px;color:#212121;transform:translateY(0.00px) rotate(0.001deg);transform-origin:0 50%;-webkit-text-stroke:0.15px #212121;">Income Sta...</div>
<div class="t" style="left:876.85px;top:554px;font-size:13.75px;line-height:19px;letter-spacing:0.114px;color:#212121;transform:translateY(0.00px) rotate(0.001deg);transform-origin:0 50%;-webkit-text-stroke:0.15px #212121;">Income</div>
<div class="t" style="left:966.65px;top:554px;font-size:13.75px;line-height:19px;letter-spacing:0.074px;color:#212121;transform:translateY(0.00px) rotate(0.001deg);transform-origin:0 50%;-webkit-text-stroke:0.15px #212121;">Income</div>
<div class="t" style="left:1176.75px;top:554px;font-size:13.75px;line-height:19px;letter-spacing:0.103px;color:#212121;transform:translateY(0.00px) rotate(0.001deg);transform-origin:0 50%;-webkit-text-stroke:0.15px #212121;">Heading</div>
<div class="t" style="left:36.85px;top:588px;font-size:13.75px;line-height:19px;letter-spacing:0.021px;color:#212121;transform:translateY(0.00px) rotate(0.001deg);transform-origin:0 50%;-webkit-text-stroke:0.15px #212121;">40001</div>
<div class="t" style="left:160.30px;top:588px;font-size:13.75px;line-height:19px;letter-spacing:-0.016px;color:#212121;transform:translateY(0.00px) rotate(0.001deg);transform-origin:0 50%;-webkit-text-stroke:0.15px #212121;">Income</div>
<div class="t" style="left:787.25px;top:588px;font-size:13.75px;line-height:19px;letter-spacing:-0.192px;color:#212121;transform:translateY(0.00px) rotate(0.001deg);transform-origin:0 50%;-webkit-text-stroke:0.15px #212121;">Income Sta...</div>
<div class="t" style="left:876.85px;top:588px;font-size:13.75px;line-height:19px;letter-spacing:0.114px;color:#212121;transform:translateY(0.00px) rotate(0.001deg);transform-origin:0 50%;-webkit-text-stroke:0.15px #212121;">Income</div>
<div class="t" style="left:966.65px;top:588px;font-size:13.75px;line-height:19px;letter-spacing:0.074px;color:#212121;transform:translateY(0.00px) rotate(0.001deg);transform-origin:0 50%;-webkit-text-stroke:0.15px #212121;">Income</div>
<div class="t" style="left:1176.75px;top:588px;font-size:13.75px;line-height:19px;letter-spacing:-0.054px;color:#212121;transform:translateY(0.00px) rotate(0.001deg);transform-origin:0 50%;-webkit-text-stroke:0.15px #212121;">Begin-Total</div>
<div class="t" style="left:36.85px;top:622px;font-size:13.75px;line-height:19px;letter-spacing:-0.012px;color:#212121;transform:translateY(0.00px) rotate(0.001deg);transform-origin:0 50%;-webkit-text-stroke:0.15px #212121;">49990</div>
<div class="t" style="left:160.30px;top:622px;font-size:13.75px;line-height:19px;letter-spacing:-0.786px;color:#212121;transform:translateY(0.00px) rotate(0.001deg);transform-origin:0 50%;-webkit-text-stroke:0.15px #212121;">TOTAL INCOME</div>
<div class="t" style="left:787.25px;top:622px;font-size:13.75px;line-height:19px;letter-spacing:-0.192px;color:#212121;transform:translateY(0.00px) rotate(0.001deg);transform-origin:0 50%;-webkit-text-stroke:0.15px #212121;">Income Sta...</div>
<div class="t" style="left:876.85px;top:622px;font-size:13.75px;line-height:19px;letter-spacing:0.114px;color:#212121;transform:translateY(0.00px) rotate(0.001deg);transform-origin:0 50%;-webkit-text-stroke:0.15px #212121;">Income</div>
<div class="t" style="left:966.65px;top:622px;font-size:13.75px;line-height:19px;letter-spacing:0.074px;color:#212121;transform:translateY(0.00px) rotate(0.001deg);transform-origin:0 50%;-webkit-text-stroke:0.15px #212121;">Income</div>
<div class="t" style="left:1176.75px;top:622px;font-size:13.75px;line-height:19px;letter-spacing:-0.155px;color:#212121;transform:translateY(0.00px) rotate(0.001deg);transform-origin:0 50%;-webkit-text-stroke:0.15px #212121;">End-Total</div>
<div class="t" style="left:36.85px;top:656px;font-size:13.75px;line-height:19px;letter-spacing:0.021px;color:#212121;transform:translateY(0.00px) rotate(0.001deg);transform-origin:0 50%;-webkit-text-stroke:0.15px #212121;">50001</div>
<div class="t" style="left:160.30px;top:656px;font-size:13.75px;line-height:19px;letter-spacing:-0.085px;color:#212121;transform:translateY(0.00px) rotate(0.001deg);transform-origin:0 50%;-webkit-text-stroke:0.15px #212121;">Cost of Goods Sold</div>
<div class="t" style="left:787.25px;top:656px;font-size:13.75px;line-height:19px;letter-spacing:-0.192px;color:#212121;transform:translateY(0.00px) rotate(0.001deg);transform-origin:0 50%;-webkit-text-stroke:0.15px #212121;">Income Sta...</div>
<div class="t" style="left:876.85px;top:656px;font-size:13.75px;line-height:19px;letter-spacing:-0.081px;color:#212121;transform:translateY(0.00px) rotate(0.001deg);transform-origin:0 50%;-webkit-text-stroke:0.15px #212121;">Cost of Go...</div>
<div class="t" style="left:966.65px;top:656px;font-size:13.75px;line-height:19px;letter-spacing:-0.017px;color:#212121;transform:translateY(0.00px) rotate(0.001deg);transform-origin:0 50%;-webkit-text-stroke:0.15px #212121;">Cost of Goods Sold</div>
<div class="t" style="left:1176.75px;top:656px;font-size:13.75px;line-height:19px;letter-spacing:-0.054px;color:#212121;transform:translateY(0.00px) rotate(0.001deg);transform-origin:0 50%;-webkit-text-stroke:0.15px #212121;">Begin-Total</div>
<div class="t" style="left:36.85px;top:690px;font-size:13.75px;line-height:19px;letter-spacing:-0.012px;color:#212121;transform:translateY(0.00px) rotate(0.001deg);transform-origin:0 50%;text-decoration:underline;text-underline-offset:1.5px;-webkit-text-stroke:0.15px #212121;">59990</div>
<div class="t" style="left:160.30px;top:690px;font-size:13.75px;line-height:19px;letter-spacing:-0.824px;color:#212121;transform:translateY(0.00px) rotate(0.001deg);transform-origin:0 50%;-webkit-text-stroke:0.15px #212121;">TOTAL COST OF GOODS SOLD</div>
<div class="t" style="left:787.25px;top:690px;font-size:13.75px;line-height:19px;letter-spacing:-0.192px;color:#212121;transform:translateY(0.00px) rotate(0.001deg);transform-origin:0 50%;-webkit-text-stroke:0.15px #212121;">Income Sta...</div>
<div class="t" style="left:876.85px;top:690px;font-size:13.75px;line-height:19px;letter-spacing:-0.081px;color:#212121;transform:translateY(0.00px) rotate(0.001deg);transform-origin:0 50%;-webkit-text-stroke:0.15px #212121;">Cost of Go...</div>
<div class="t" style="left:966.65px;top:690px;font-size:13.75px;line-height:19px;letter-spacing:-0.017px;color:#212121;transform:translateY(0.00px) rotate(0.001deg);transform-origin:0 50%;-webkit-text-stroke:0.15px #212121;">Cost of Goods Sold</div>
<div class="t" style="left:1176.75px;top:690px;font-size:13.75px;line-height:19px;letter-spacing:-0.155px;color:#212121;transform:translateY(0.00px) rotate(0.001deg);transform-origin:0 50%;-webkit-text-stroke:0.15px #212121;">End-Total</div>
</div>
</body></html>
